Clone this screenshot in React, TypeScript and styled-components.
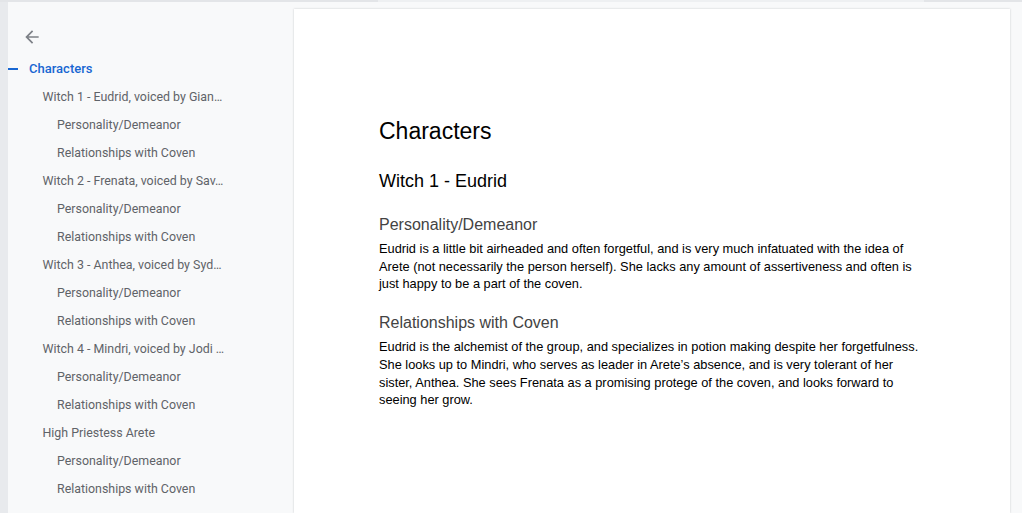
import React from "react";
import styled, { createGlobalStyle } from "styled-components";

const GlobalStyle = createGlobalStyle`
  html, body {
    margin: 0;
    padding: 0;
    background: #f8f9fa;
  }
  body {
    font-family: Roboto, "Liberation Sans", Arial, sans-serif;
  }
`;

const Screen = styled.div`
  width: 1022px;
  height: 513px;
  display: flex;
  flex-direction: column;
  overflow: hidden;
`;

const TopBar = styled.div`
  height: 2px;
  display: flex;
  background: #e3e5e8;
  flex-shrink: 0;
`;

const TopThumb = styled.div`
  margin-left: 378px;
  width: 546px;
  background: #eef0f2;
`;

const Body = styled.div`
  flex: 1;
  display: flex;
  min-height: 0;
`;

const LeftStrip = styled.div`
  width: 8px;
  background: #e8eaed;
  flex-shrink: 0;
`;

const Sidebar = styled.nav`
  width: 285px;
  flex-shrink: 0;
  background: #f8f9fa;
  display: flex;
  flex-direction: column;
  padding-top: 22px;
  box-sizing: border-box;
`;

const BackButton = styled.button`
  width: 24px;
  height: 24px;
  margin: 1px 0 6px 12px;
  padding: 0;
  border: none;
  background: transparent;
  display: flex;
  align-items: center;
  justify-content: center;
  color: #7d8187;
`;

const OutlineList = styled.ul`
  list-style: none;
  margin: 0;
  padding: 0;
`;

const OutlineItem = styled.li<{ $level: number; $active?: boolean }>`
  position: relative;
  height: 28px;
  line-height: 28px;
  padding-left: ${(p) => (p.$level === 0 ? 21 : 20 + p.$level * 14.5)}px;
  font-size: ${(p) => (p.$active ? 13 : 12.4)}px;
  font-weight: ${(p) => (p.$active ? 500 : 400)};
  color: ${(p) => (p.$active ? "#1967d2" : "#5f6368")};
  white-space: nowrap;
`;

const ActiveDash = styled.span`
  position: absolute;
  left: 0;
  top: 13px;
  width: 10px;
  height: 2px;
  background: #1967d2;
`;

const Canvas = styled.main`
  flex: 1;
  display: flex;
  padding: 7px 12px 0 1px;
  background: #f8f9fa;
  min-width: 0;
`;

const Page = styled.article`
  flex: 1;
  background: #ffffff;
  box-shadow: 0 0 2px rgba(60, 64, 67, 0.25);
  padding: 107px 84px 0 85px;
  font-family: "Liberation Sans", Arial, sans-serif;
  color: #000000;
`;

const Title = styled.h1`
  margin: 0;
  font-size: 23px;
  line-height: 30px;
  font-weight: 400;
`;

const Heading2 = styled.h2`
  margin: 23px 0 0;
  font-size: 18px;
  line-height: 24px;
  font-weight: 400;
`;

const Heading3 = styled.h3<{ $gap: number }>`
  margin: ${(p) => p.$gap}px 0 0;
  font-size: 16px;
  line-height: 22px;
  font-weight: 400;
  color: #434343;
`;

const Paragraph = styled.p`
  margin: 4px 0 0;
  font-size: 12.8px;
  line-height: 17.7px;
`;

const ArrowBack = () => (
  <svg width="20" height="20" viewBox="0 0 24 24" fill="currentColor">
    <path d="M20 11H7.83l5.59-5.59L12 4l-8 8 8 8 1.41-1.41L7.83 13H20v-2z" />
  </svg>
);

const outline = [
  { text: "Characters", level: 0, active: true },
  { text: "Witch 1 - Eudrid, voiced by Gian…", level: 1 },
  { text: "Personality/Demeanor", level: 2 },
  { text: "Relationships with Coven", level: 2 },
  { text: "Witch 2 - Frenata, voiced by Sav…", level: 1 },
  { text: "Personality/Demeanor", level: 2 },
  { text: "Relationships with Coven", level: 2 },
  { text: "Witch 3 - Anthea, voiced by Syd…", level: 1 },
  { text: "Personality/Demeanor", level: 2 },
  { text: "Relationships with Coven", level: 2 },
  { text: "Witch 4 - Mindri, voiced by Jodi …", level: 1 },
  { text: "Personality/Demeanor", level: 2 },
  { text: "Relationships with Coven", level: 2 },
  { text: "High Priestess Arete", level: 1 },
  { text: "Personality/Demeanor", level: 2 },
  { text: "Relationships with Coven", level: 2 },
];

function App() {
  return (
    <Screen>
      <GlobalStyle />
      <TopBar>
        <TopThumb />
      </TopBar>
      <Body>
        <LeftStrip />
        <Sidebar>
          <BackButton aria-label="Back">
            <ArrowBack />
          </BackButton>
          <OutlineList>
            {outline.map((item, i) => (
              <OutlineItem key={i} $level={item.level} $active={item.active}>
                {item.active && <ActiveDash />}
                {item.text}
              </OutlineItem>
            ))}
          </OutlineList>
        </Sidebar>
        <Canvas>
          <Page>
            <Title>Characters</Title>
            <Heading2>Witch 1 - Eudrid</Heading2>
            <Heading3 $gap={21}>Personality/Demeanor</Heading3>
            <Paragraph>
              Eudrid is a little bit airheaded and often forgetful, and is very much infatuated with the
              idea of Arete (not necessarily the person herself). She lacks any amount of assertiveness
              and often is just happy to be a part of the coven.
            </Paragraph>
            <Heading3 $gap={19}>Relationships with Coven</Heading3>
            <Paragraph>
              Eudrid is the alchemist of the group, and specializes in potion making despite her
              forgetfulness. She looks up to Mindri, who serves as leader in Arete’s absence, and is very
              tolerant of her sister, Anthea. She sees Frenata as a promising protege of the coven, and
              looks forward to seeing her grow.
            </Paragraph>
          </Page>
        </Canvas>
      </Body>
    </Screen>
  );
}

export default App;
